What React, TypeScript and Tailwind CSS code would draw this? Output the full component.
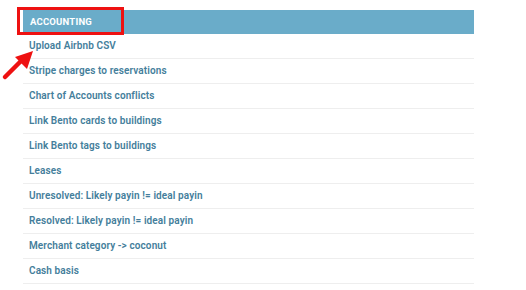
const links = [
  "Upload Airbnb CSV",
  "Stripe charges to reservations",
  "Chart of Accounts conflicts",
  "Link Bento cards to buildings",
  "Link Bento tags to buildings",
  "Leases",
  "Unresolved: Likely payin != ideal payin",
  "Resolved: Likely payin != ideal payin",
  "Merchant category -> coconut",
  "Cash basis",
  "General ledger account mappings",
];

export default function App() {
  return (
    <div
      className="relative w-[526px] h-[290px] overflow-hidden bg-white"
      style={{ fontFamily: "Roboto, 'Liberation Sans', sans-serif" }}
    >
      <div className="ml-[23px] mt-[10px] w-[451px]">
        <div className="h-[24px] bg-[#6aacc9] flex items-center px-[7px]">
          <span className="text-[9.5px] font-bold text-white tracking-[0.2px]">ACCOUNTING</span>
        </div>
        {links.map((label) => (
          <div key={label} className="h-[25px] border-b border-[#eeeeee] flex items-center px-[6px] pb-[1px]">
            <span className="text-[10px] font-semibold text-[#447e9b] tracking-[0.1px]">{label}</span>
          </div>
        ))}
      </div>

      {/* annotation overlay */}
      <div className="absolute left-[17px] top-[7px] w-[107px] h-[28px] border-[3px] border-[#ee1111]" />
      <svg className="absolute left-0 top-[46px]" width="40" height="36" viewBox="0 0 40 36">
        <line x1="5" y1="31" x2="22" y2="14" stroke="#ee1111" strokeWidth="4.5" strokeLinecap="round" />
        <polygon points="33,5 15,11 27,23" fill="#ee1111" />
      </svg>
    </div>
  );
}
